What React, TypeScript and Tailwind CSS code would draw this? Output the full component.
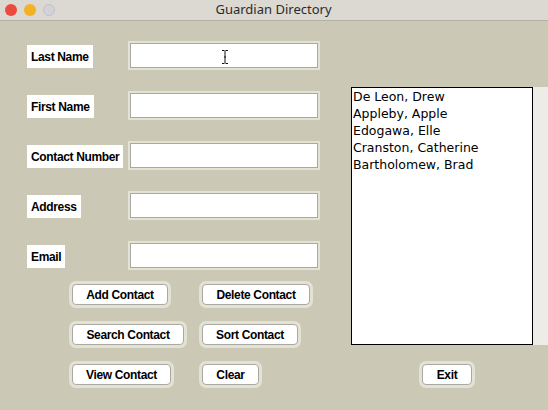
import React from "react";

const fields = ["Last Name", "First Name", "Contact Number", "Address", "Email"];
const contacts = [
  "De Leon, Drew",
  "Appleby, Apple",
  "Edogawa, Elle",
  "Cranston, Catherine",
  "Bartholomew, Brad",
];

function TkButton({ label, width }: { label: string; width: string }) {
  return (
    <button
      className={`${width} flex h-[21px] items-center justify-center rounded-[4px] border border-[#a9a8a4] bg-white text-[12px] font-bold tracking-[-0.35px] text-black ring-[3px] ring-[#e4e2d2] font-['Liberation_Sans',Arial,sans-serif]`}
    >
      {label}
    </button>
  );
}

export default function App() {
  return (
    <div className="h-[410px] w-[548px] overflow-hidden bg-[#cbc9b6] font-['Liberation_Sans',Arial,sans-serif]">
      <div className="relative flex h-[21px] items-center border-b border-[#b3b1a2] bg-[#dbd9d2]">
        <div className="flex items-center gap-[7px] pl-[5px]">
          <span className="h-[12px] w-[12px] rounded-full bg-[#ec4a3e]" />
          <span className="h-[12px] w-[12px] rounded-full bg-[#f4b124]" />
          <span className="h-[12px] w-[12px] rounded-full border border-[#c2c1c8] bg-[#d3d2d6]" />
        </div>
        <span className="flex-1 pr-[56px] text-center text-[13px] text-[#2b2b2b] font-['Noto_Sans',sans-serif]">
          Guardian Directory
        </span>
      </div>

      <div className="flex">
        <div className="w-[351px] pl-[27px] pt-[22px]">
          <div className="flex flex-col gap-[25px]">
            {fields.map((f, i) => (
              <div key={f} className="flex h-[25px] items-end">
                <div className="w-[103px]">
                  <span className="inline-flex h-[23px] items-center bg-white px-[4px] text-[12px] font-bold tracking-[-0.35px] text-black">
                    {f}
                  </span>
                </div>
                <div className="relative h-[25px] w-[188px] border border-[#a9a8a4] bg-white ring-2 ring-[#e4e2d2]">
                  {i === 0 && (
                    <svg className="absolute left-[90px] top-[6px]" width="8" height="14" viewBox="0 0 8 14">
                      <path d="M1 0.5h2.5M4.5 0.5h2.5M4 1v12M1 13.5h2.5M4.5 13.5h2.5M3 7h2" stroke="#111" strokeWidth="1" fill="none" />
                    </svg>
                  )}
                </div>
              </div>
            ))}
          </div>

          <div className="ml-[45px] mt-[16px] grid grid-cols-[130px_auto] gap-y-[19px]">
            <div><TkButton label="Add Contact" width="w-[96px]" /></div>
            <div><TkButton label="Delete Contact" width="w-[108px]" /></div>
            <div><TkButton label="Search Contact" width="w-[112px]" /></div>
            <div><TkButton label="Sort Contact" width="w-[96px]" /></div>
            <div><TkButton label="View Contact" width="w-[99px]" /></div>
            <div><TkButton label="Clear" width="w-[57px]" /></div>
          </div>
        </div>

        <div className="pt-[66px]">
          <div className="flex">
            <div className="h-[258px] w-[182px] border border-black bg-white px-[1px] text-[12.5px] leading-[17px] text-black font-['DejaVu_Sans',sans-serif]">
              {contacts.map((c) => (
                <div key={c}>{c}</div>
              ))}
            </div>
            <div className="h-[258px] w-[15px] bg-[#edece6]" />
          </div>
          <div className="ml-[71px] mt-[19px]">
            <TkButton label="Exit" width="w-[50px]" />
          </div>
        </div>
      </div>
    </div>
  );
}
